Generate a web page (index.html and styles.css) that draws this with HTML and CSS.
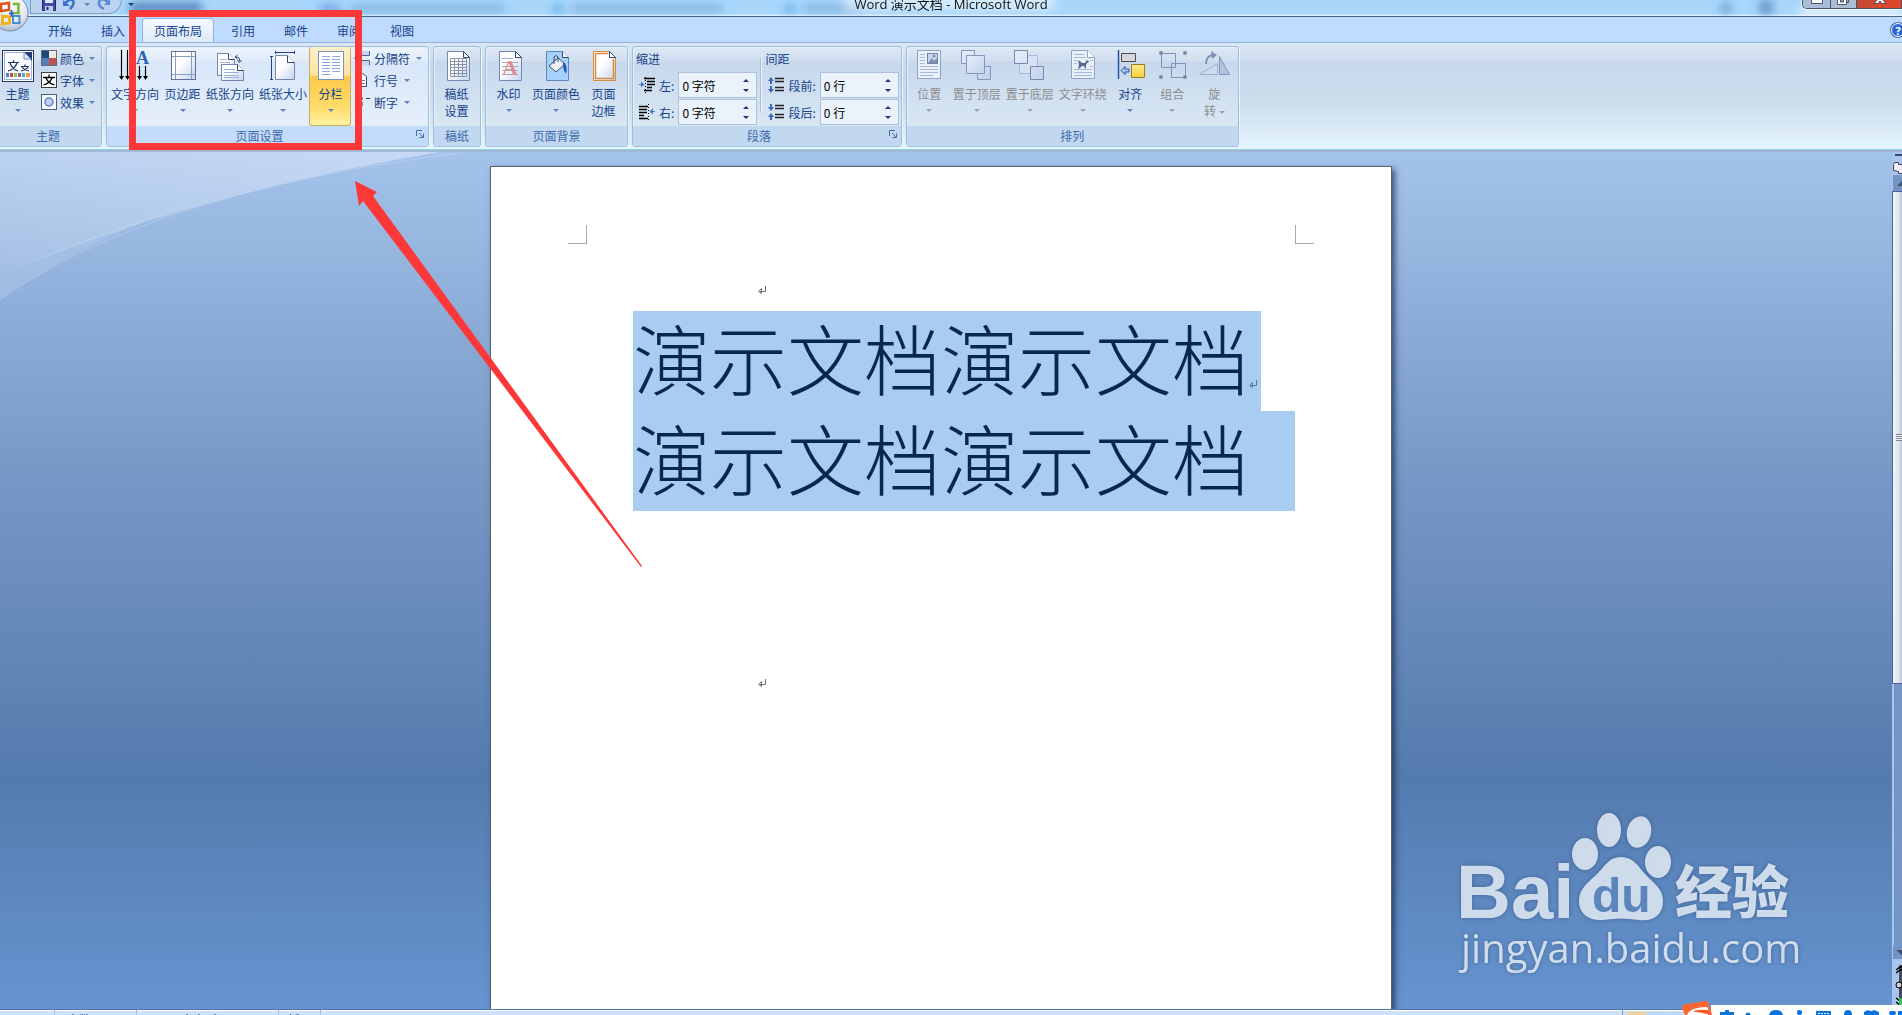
FILE: index.html
```html
<!DOCTYPE html>
<html lang="zh-CN">
<head>
  <meta charset="UTF-8">
  <meta name="viewport" content="width=device-width, initial-scale=1.0">
  <title>Word 演示文档 - Microsoft Word</title>
  <link rel="stylesheet" href="styles.css">
</head>
<body>

<svg class="defs" width="0" height="0" aria-hidden="true">
  <defs>
    <linearGradient id="paper" x1="0" y1="0" x2="1" y2="1">
      <stop offset="0.4" stop-color="#ffffff"/>
      <stop offset="1" stop-color="#c3d3ee"/>
    </linearGradient>
    <linearGradient id="pale" x1="0" y1="0" x2="1" y2="1">
      <stop offset="0" stop-color="#e6eefa"/>
      <stop offset="1" stop-color="#c2d1e8"/>
    </linearGradient>
    <linearGradient id="gold" x1="0" y1="0" x2="0" y2="1">
      <stop offset="0" stop-color="#ffe98c"/>
      <stop offset="1" stop-color="#f5cf3f"/>
    </linearGradient>
    <symbol id="left-page" viewBox="0 0 32 32">
      <path d="M6.500 1.500H22.500L28.500 7.500V30.500H6.500Z" fill="url(#paper)" stroke="#7488b0"/>
      <path d="M22.500 1.500V7.500H28.500Z" fill="#fff" stroke="#33476f"/>
    </symbol>
  </defs>
</svg>

<header class="titlebar">
  <svg class="glass" width="1902" height="16" aria-hidden="true">
    <filter id="soft"><feGaussianBlur stdDeviation="5 4"/></filter>
    <g filter="url(#soft)" fill="#4d7fb8">
      <rect x="130" y="3" width="72" height="9"/>
      <rect x="320" y="5" width="20" height="7" fill="#3b6fd0" opacity=".6"/>
      <rect x="350" y="4" width="155" height="8" opacity=".4"/>
      <circle cx="558" cy="9" r="5" fill="#2d8fd8" opacity=".6"/>
      <rect x="572" y="4" width="150" height="8" opacity=".4"/>
      <circle cx="790" cy="9" r="5" fill="#2d8fd8" opacity=".6"/>
      <rect x="804" y="4" width="60" height="8" opacity=".4"/>
      <rect x="845" y="-6" width="210" height="16" fill="#fff" opacity=".5"/>
      <circle cx="1726" cy="8" r="6" opacity=".6"/>
      <circle cx="1766" cy="7" r="8" opacity=".7"/>
      <rect x="1800" y="6" width="102" height="12" fill="#fff" opacity=".6"/>
    </g>
  </svg>
  <div class="quick-access">
    <button class="qa-btn" aria-label="保存">
      <svg width="14" height="12"><path d="M.500 -4V10.500H13.500V-4Z" fill="#4349a8" stroke="#23286c"/><path d="M3 -2h8v5H3z" fill="#dfe6ff"/><path d="M3 6h8v5H3z" fill="#c3c8ee"/><path d="M4.500 7h2v3h-2z" fill="#23286c"/></svg>
    </button>
    <button class="qa-btn" aria-label="撤消">
      <svg width="14" height="12"><path d="M2 3Q9 -3 10.500 2Q11 5 7 9" fill="none" stroke="#3b6fd0" stroke-width="2.500"/><path d="M0 0V6H7Z" fill="#3b6fd0"/></svg>
    </button>
    <span class="arrow"></span>
    <button class="qa-btn" aria-label="恢复">
      <svg width="14" height="12"><path d="M12 3Q4 -4 2 2Q1 6 7 9" fill="none" stroke="#5c8ad8" stroke-width="2.500"/><path d="M13 -1V5H7Z" fill="#5c8ad8"/></svg>
    </button>
  </div>
  <button class="qa-more" aria-label="自定义快速访问工具栏"><span class="arrow dark"></span></button>
  <h1 class="title">Word 演示文档 - Microsoft Word</h1>
  <div class="window-controls">
    <button aria-label="最小化"><svg width="27" height="8"><path d="M8.500 -1V3.500H19.500V-1" fill="#fff" stroke="#4c5468"/></svg></button>
    <button aria-label="还原"><svg width="25" height="8"><path d="M6.500 -2V4.500H15.500V-2" fill="#fff" stroke="#4c5468"/><path d="M9.500 -1h3v3h-3zM15.500 2.500h2V-1" fill="#8ea2bd" stroke="#4c5468"/></svg></button>
    <button class="close" aria-label="关闭"><svg width="44" height="8"><path d="M17 3.500L21 -1H25L29 3.500H25L23 1L21 3.500Z" fill="#fff" stroke="#4c4a58"/></svg></button>
  </div>
  <button class="office-button" aria-label="Office 按钮">
    <svg width="29" height="33" viewBox="0 0 29 33">
      <defs><radialGradient id="orb" cx=".5" cy=".3" r=".7"><stop offset="0" stop-color="#fff"/><stop offset=".7" stop-color="#e4e9f1"/><stop offset="1" stop-color="#aab5c8"/></radialGradient></defs>
      <circle cx="10" cy="13" r="18" fill="url(#orb)" stroke="#7f8ea9"/>
      <path d="M1 4L9 3V10L1 11Z" fill="none" stroke="#e3521b" stroke-width="2.500"/>
      <path d="M12.500 4H18.500V13H13.500" fill="none" stroke="#7db73a" stroke-width="2.500"/>
      <path d="M2.500 16V24L9.500 23V17Z" fill="none" stroke="#f3b21d" stroke-width="3"/>
      <path d="M13 16H19.500V23H13Z" fill="none" stroke="#3e8fd6" stroke-width="2"/>
      <path d="M9 13.500h5M11.500 10v7" stroke="#3765b8" stroke-width="2"/>
    </svg>
  </button>
</header>

<nav class="tabs">
  <button class="tab">开始</button>
  <button class="tab">插入</button>
  <button class="tab active">页面布局</button>
  <button class="tab">引用</button>
  <button class="tab">邮件</button>
  <button class="tab">审阅</button>
  <button class="tab">视图</button>
  <button class="help" aria-label="帮助">?</button>
</nav>

<section class="ribbon">

  <div class="group first">
    <div class="group-body">
      <button class="big">
        <svg width="32" height="32"><rect x=".500" y=".500" width="31" height="31" fill="#fff" stroke="#27375c"/><rect x="2.500" y="2.500" width="27" height="27" fill="#fafcff" stroke="#9fb2d6"/><path d="M22 2H30V11Z" fill="#1e3f7c"/><path d="M22 2V9H29Z" fill="#dfe8f6" stroke="#7b8db4"/><path d="M6 12.500h11M11.500 10v2M8 13q2 6 8 8M15 13q-2 6 -9 8M19 16.500h8M23 14.500v2M20 17q2 3 7 4M26 17q-2 3 -7 4" fill="none" stroke="#1d3363" stroke-width="1.200"/><path d="M4 23h3v4H4z" fill="#4f81bd"/><path d="M8 23h3v4H8z" fill="#c0504d"/><path d="M12 23h3v4h-3z" fill="#9bbb59"/><path d="M16 23h3v4h-3z" fill="#8064a2"/><path d="M20 23h3v4h-3z" fill="#4bacc6"/><path d="M24 23h4v4h-4z" fill="#f79646"/></svg>
        <span>主题</span><i class="arrow"></i>
      </button>
      <div class="side">
        <button class="small"><svg width="16" height="16"><path d="M0 0h8v8H0z" fill="#1f497d"/><path d="M8 0h8v8H8z" fill="#eeece1"/><path d="M0 8h8v8H0z" fill="#4f81bd"/><path d="M8 8h8v8H8z" fill="#c0504d"/><rect x=".500" y=".500" width="15" height="15" fill="none" stroke="#5f6b86"/></svg><span>颜色</span><i class="arrow"></i></button>
        <button class="small"><svg width="16" height="16"><rect x=".500" y=".500" width="15" height="15" fill="#fff" stroke="#3c3f48"/><path d="M2 5.500H14M8 2.500V5M5 6Q7 11 13.500 13M11 6Q9 11 2.500 13" fill="none" stroke="#000" stroke-width="1.300"/></svg><span>字体</span><i class="arrow"></i></button>
        <button class="small"><svg width="16" height="16"><rect x=".500" y=".500" width="15" height="15" fill="#f7faff" stroke="#4e5d7c"/><circle cx="8" cy="8" r="4" fill="#bcd2f6" stroke="#5f83c6" stroke-width="1.500"/></svg><span>效果</span><i class="arrow"></i></button>
      </div>
    </div>
    <div class="group-label">主题</div>
  </div>

  <div class="group hover">
    <div class="group-body">
      <button class="big">
        <svg width="32" height="32"><path d="M2.500 0V28M8.500 0V28M20.500 16V28M26.500 16V28" stroke="#000" stroke-width="1.200"/><path d="M0 26h5l-2.500 4zM6 26h5l-2.500 4zM18 26h5l-2.500 4zM24 26h5l-2.500 4z"/><text x="17" y="14" class="icon-letter blue">A</text></svg>
        <span>文字方向</span><i class="arrow"></i>
      </button>
      <button class="big">
        <svg width="32" height="32"><rect x="4.500" y="1.500" width="24" height="28" fill="url(#paper)" stroke="#5f7299"/><path d="M8.500 2V29M24.500 2V29M5 6.500H28M5 24.500H28" stroke="#8a9cc0"/></svg>
        <span>页边距</span><i class="arrow"></i>
      </button>
      <button class="big">
        <svg width="32" height="32"><path d="M3.500 3.500H14.500L20.500 9.500V25.500H3.500Z" fill="url(#paper)" stroke="#7488b0"/><path d="M14.500 3.500V9.500H20.500" fill="#fff" stroke="#33476f"/><path d="M6 9.500h7M6 12.500h10M6 15.500h10M6 18.500h4" stroke="#9cb0d8"/><path d="M7.500 14.500H23.500L29.500 20.500V30.500H7.500Z" fill="url(#paper)" stroke="#7488b0"/><path d="M23.500 14.500V20.500H29.500" fill="#fff" stroke="#33476f"/><path d="M10 19.500h11M10 22.500h15M10 25.500h15M10 27.500h15" stroke="#9cb0d8"/><path d="M22 7Q26 7 25.500 11M23.500 10l2 2.500l2 -2.500M23.500 5L21 7l2.500 2" fill="none" stroke="#33476f"/></svg>
        <span>纸张方向</span><i class="arrow"></i>
      </button>
      <button class="big">
        <svg width="32" height="32"><path d="M8.500 5.500H20.500L27.500 12.500V29.500H8.500Z" fill="url(#paper)" stroke="#7488b0"/><path d="M20.500 5.500V12.500H27.500" fill="#fff" stroke="#33476f"/><path d="M8.500 2.500H27.500M8.500 1v3M27.500 1v3M4.500 6V29.500M3 6.500h3M3 29.500h3" fill="none" stroke="#243f8c"/></svg>
        <span>纸张大小</span><i class="arrow"></i>
      </button>
      <button class="big selected">
        <svg width="32" height="32"><rect x="3.500" y="1.500" width="25" height="28" fill="#fff" stroke="#7a91c0"/><path d="M7 6.500h8M7 9.500h8M7 12.500h8M7 15.500h8M7 18.500h8M7 21.500h8M7 24.500h8M17 6.500h8M17 9.500h8M17 12.500h8M17 15.500h8M17 18.500h8M17 21.500h8" stroke="#8aa4dc"/></svg>
        <span>分栏</span><i class="arrow"></i>
      </button>
      <div class="side">
        <button class="small"><svg width="16" height="16"><path d="M3.500 1V5.500H15.500V1M3.500 15.500V10.500H15.500V15.500" fill="#c7d6ef" stroke="#4c6296"/><path d="M0 8h3" stroke="#4c6296"/></svg><span>分隔符</span><i class="arrow"></i></button>
        <button class="small"><svg width="16" height="16"><path d="M3.500 1.500H8.500L12.500 4.500V14.500H3.500Z" fill="#fff" stroke="#33476f"/><path d="M6 5.500h2M6 8.500h5M6 11.500h5" stroke="#6a80b0"/></svg><span>行号</span><i class="arrow"></i></button>
        <button class="small"><svg width="16" height="16"><path d="M3 3h5v3H3M8 6H4v3h5M6 9v5M4 11h5M12 4.500h4" fill="none" stroke="#33363e"/></svg><span>断字</span><i class="arrow"></i></button>
      </div>
    </div>
    <div class="group-label with-launcher">页面设置
      <button class="launcher" aria-label="页面设置对话框"><svg width="8" height="8"><path d="M.500 6V.500H6M3.500 7.500H7.500V3.500M3 3l4 4" fill="none" stroke="#4a6aa5"/></svg></button>
    </div>
  </div>

  <div class="group">
    <div class="group-body">
      <button class="big">
        <svg width="32" height="32"><use href="#left-page"/><path d="M9.500 8.500h16v18h-16zM13.500 8v18M17.500 8v18M21.500 8v18M9 11.500h16M9 14.500h16M9 17.500h16M9 20.500h16M9 23.500h16" fill="none" stroke="#8b95aa"/></svg>
        <span>稿纸<br>设置</span>
      </button>
    </div>
    <div class="group-label">稿纸</div>
  </div>

  <div class="group">
    <div class="group-body">
      <button class="big">
        <svg width="32" height="32"><use href="#left-page"/><path d="M9 8.500h11M9 12.500h16M9 16.500h16M9 20.500h16M9 24.500h16" stroke="#9caac6"/><text x="9" y="25" class="icon-letter red">A</text></svg>
        <span>水印</span><i class="arrow"></i>
      </button>
      <button class="big">
        <svg width="32" height="32"><path d="M6.500 1.500H22.500L28.500 7.500V30.500H6.500Z" fill="#a5d1fb" stroke="#5f86c0"/><path d="M22.500 1.500V7.500H28.500" fill="#fff" stroke="#33476f"/><path d="M9 16L18 8L25 14L16 22Z" fill="#eceff6" stroke="#3c4a68"/><path d="M14 14V7q2 -3 4 0v5" fill="none" stroke="#3c4a68"/><path d="M23 12q5 2 3 12q-3 -4 -3 -9z" fill="#2456b4"/></svg>
        <span>页面颜色</span><i class="arrow"></i>
      </button>
      <button class="big">
        <svg width="32" height="32"><path d="M5.500 1.500H21.500L27.500 7.500V30.500H5.500Z" fill="url(#paper)" stroke="#d98b3a"/><path d="M7.500 3.500H20.500M7.500 3.500V28.500H25.500V9" fill="none" stroke="#d98b3a" stroke-width="1.500"/><path d="M21.500 1.500V7.500H27.500Z" fill="#fff" stroke="#33476f"/></svg>
        <span>页面<br>边框</span>
      </button>
    </div>
    <div class="group-label">页面背景</div>
  </div>

  <div class="group">
    <div class="group-body fields">
      <div class="field-set">
        <h2>缩进</h2>
        <div class="field">
          <svg width="16" height="16"><path d="M5 1.500h11M8 4.500h8M8 7.500h8M8 10.500h5M5 13.500h8" stroke="#000" stroke-width="1.500"/><path d="M6.500 0v16" stroke="#000" stroke-dasharray="1 2"/><path d="M0 7h2V4.500L5.500 7.500L2 10.500V8H0z" fill="#4776cf"/></svg>
          <label for="indent-left">左:</label>
          <div class="spin"><input id="indent-left" type="text" value="0 字符"><span class="steps"><button class="up" aria-label="增加"></button><button class="down" aria-label="减少"></button></span></div>
        </div>
        <div class="field">
          <svg width="16" height="16"><path d="M0 2.500h9M0 5.500h8M0 8.500h8M0 11.500h5M0 14.500h9" stroke="#000" stroke-width="1.500"/><path d="M9.500 0v16" stroke="#000" stroke-dasharray="1 2"/><path d="M16 7h-2V4.500L10.500 7.500L14 10.500V8H16z" fill="#4776cf"/></svg>
          <label for="indent-right">右:</label>
          <div class="spin"><input id="indent-right" type="text" value="0 字符"><span class="steps"><button class="up" aria-label="增加"></button><button class="down" aria-label="减少"></button></span></div>
        </div>
      </div>
      <div class="divider"></div>
      <div class="field-set">
        <h2>间距</h2>
        <div class="field">
          <svg width="16" height="16"><path d="M7 1.500h9M7 4.500h9M7 10.500h9M7 13.500h9" stroke="#222" stroke-width="1.300"/><path d="M3 0L6 4H4V7H2V4H0ZM3 16L6 12H4V9H2V12H0Z" fill="#3d68c4"/></svg>
          <label for="space-before">段前:</label>
          <div class="spin"><input id="space-before" type="text" value="0 行"><span class="steps"><button class="up" aria-label="增加"></button><button class="down" aria-label="减少"></button></span></div>
        </div>
        <div class="field">
          <svg width="16" height="16"><path d="M7 1.500h9M7 4.500h9M7 10.500h9M7 13.500h9" stroke="#222" stroke-width="1.300"/><path d="M3 7L6 3H4V0H2V3H0ZM3 9L6 13H4V16H2V13H0Z" fill="#3d68c4"/></svg>
          <label for="space-after">段后:</label>
          <div class="spin"><input id="space-after" type="text" value="0 行"><span class="steps"><button class="up" aria-label="增加"></button><button class="down" aria-label="减少"></button></span></div>
        </div>
      </div>
    </div>
    <div class="group-label with-launcher">段落
      <button class="launcher" aria-label="段落对话框"><svg width="8" height="8"><path d="M.500 6V.500H6M3.500 7.500H7.500V3.500M3 3l4 4" fill="none" stroke="#4a6aa5"/></svg></button>
    </div>
  </div>

  <div class="group">
    <div class="group-body">
      <button class="big" disabled>
        <svg width="32" height="32"><rect x="4.500" y=".500" width="23" height="28" fill="#e9f0fa" stroke="#8fa3c8"/><rect x="14.500" y="3.500" width="10" height="10" fill="#c9d7ec" stroke="#6f84ad"/><path d="M15 13l4 -5l2 3l3 -3v5z" fill="#7b8fb6"/><circle cx="21" cy="6" r="1.500" fill="#7b8fb6"/><path d="M7 4.500h5M7 7.500h5M7 10.500h5M7 13.500h5M7 16.500h18M7 19.500h18M7 22.500h18M7 25.500h13" stroke="#a8b9d8"/></svg>
        <span>位置</span><i class="arrow"></i>
      </button>
      <button class="big" disabled>
        <svg width="32" height="32"><g fill="url(#pale)" stroke="#8297bf"><path d="M.500 .500h13v13H.500zM16.500 16.500h13v13h-13z"/><path d="M5.500 5.500h18v18h-18z"/></g></svg>
        <span>置于顶层</span><i class="arrow"></i>
      </button>
      <button class="big" disabled>
        <svg width="32" height="32"><path d="M5.500 5.500h18v18h-18z" fill="#d6e2f2" stroke="#a9badb"/><g fill="url(#pale)" stroke="#7288b2"><path d="M.500 .500h13v13H.500zM16.500 16.500h13v13h-13z"/></g></svg>
        <span>置于底层</span><i class="arrow"></i>
      </button>
      <button class="big" disabled>
        <svg width="32" height="32"><path d="M4.500 .500H20.500L27.500 7.500V28.500H4.500Z" fill="#e9f0fa" stroke="#8fa3c8"/><path d="M20.500 .500V7.500H27.500" fill="#fff" stroke="#8fa3c8"/><path d="M7 4.500h10M7 7.500h12M7 10.500h3M23 10.500h3M7 13.500h3M23 16.500h3M7 19.500h18M7 22.500h18M7 25.500h18" stroke="#a8b9d8"/><path d="M11 10l3 2l1 1h3l1 -2l2 -1l1 2l-2 1l-1 2v4l-1 -1l-1 -2h-2l-2 2l-2 1l1 -4z" fill="#566a90"/></svg>
        <span>文字环绕</span><i class="arrow"></i>
      </button>
      <button class="big">
        <svg width="32" height="32"><path d="M4.500 0V29" stroke="#2a50a8" stroke-width="1.500"/><path d="M7.500 3.500h14v8h-14z" fill="#d8d8dc" stroke="#4b4b54"/><path d="M17.500 14.500h13v13h-13z" fill="url(#gold)" stroke="#a07d1c"/><path d="M7 20.500L11 16.500V19H15V22H11V24.500Z" fill="#a9c7f6" stroke="#2a50a8"/></svg>
        <span>对齐</span><i class="arrow"></i>
      </button>
      <button class="big" disabled>
        <svg width="32" height="32"><g fill="none" stroke="#7f91b4"><path d="M5.500 3.500h14v14h-14zM15.500 13.500h14v14h-14z"/></g><g fill="#7689ae"><circle cx="5" cy="3" r="2"/><circle cx="29" cy="3" r="2"/><circle cx="5" cy="27" r="2"/><circle cx="29" cy="27" r="2"/></g></svg>
        <span>组合</span><i class="arrow"></i>
      </button>
      <button class="big" disabled>
        <svg width="32" height="32"><path d="M1.500 24.500L19.500 13.500V24.500Z" fill="#cfdbed" stroke="#9dafcf"/><path d="M21.500 24.500V6.500L31.500 24.500Z" fill="#b3c2dc" stroke="#8497bb"/><path d="M8 14Q8 6 15 5" fill="none" stroke="#7f91b4" stroke-width="2"/><path d="M13 1l6 4l-5 4z" fill="#7f91b4"/></svg>
        <span>旋<br>转 <i class="arrow inline"></i></span>
      </button>
    </div>
    <div class="group-label">排列</div>
  </div>
</section>

<main class="workspace">
  <svg class="swoosh" width="500" height="160" aria-hidden="true">
    <defs><linearGradient id="wave" x1="0" y1="1" x2="1" y2="0"><stop offset="0" stop-color="#d5e4f6" stop-opacity=".25"/><stop offset="1" stop-color="#e0e9fa" stop-opacity=".6"/></linearGradient></defs>
    <path d="M0 0H440Q200 40 0 123Z" fill="url(#wave)"/>
    <path d="M0 123Q130 65 285 24Q120 65 0 147Z" fill="#c5daf2" opacity=".3"/>
    <path d="M0 148Q150 40 460 1" fill="none" stroke="#c5daf4" stroke-opacity=".5"/>
  </svg>

  <div class="canvas">
    <article class="page">
      <div class="crop-marks"><span class="crop left"></span><span class="crop right"></span></div>
      <div class="doc">
        <p class="blank"><svg class="pilcrow" width="8" height="8"><path d="M7.500 0V5.500H2M3.500 2.500v5L.500 5.500Z" fill="none" stroke="#6f6f6f"/></svg></p>
        <p class="line"><mark>演示文档演示文档<svg class="pilcrow" width="8" height="8"><path d="M7.500 0V5.500H2M3.500 2.500v5L.500 5.500Z" fill="none" stroke="#56789f"/></svg></mark></p>
        <p class="line"><mark class="full">演示文档演示文档</mark></p>
        <p class="blank after"><svg class="pilcrow" width="8" height="8"><path d="M7.500 0V5.500H2M3.500 2.500v5L.500 5.500Z" fill="none" stroke="#6f6f6f"/></svg></p>
      </div>
    </article>
  </div>

  <div class="scrollbar">
    <div class="split"></div>
    <button class="ruler-toggle" aria-label="标尺"><svg width="10" height="12"><path d="M1.500 2.500l1 -2h4v2h4v9h-4v-2l-5 -1z" fill="#f6eef6" stroke="#3d4460"/></svg></button>
    <button class="scroll-btn" aria-label="向上滚动"><svg width="10" height="16"><path d="M4 11L10 5V11Z" fill="#47506e"/></svg></button>
    <div class="thumb"><span class="grip"></span></div>
    <div class="track"></div>
    <button class="scroll-btn" aria-label="向下滚动"><svg width="10" height="14"><path d="M3 5H10V11Z" fill="#47506e"/></svg></button>
    <svg class="browse" width="10" height="50"><path d="M7 6h3v44H7z" fill="#444a58"/><path d="M4 11l4 -3h2M4 14l4 -3h2M4 39l4 3h2M4 43l4 3h2" fill="none" stroke="#000" stroke-width="1.500"/><circle cx="7" cy="26" r="3" fill="#ccc" stroke="#000"/><path d="M7 39h3v8H7z" fill="#34c558"/></svg>
  </div>
</main>

<footer class="statusbar">
  <span class="status s-page">页面: 1/1</span>
  <span class="status s-words">字数: 16</span>
  <span class="status s-lang">中文(中国)</span>
  <span class="status s-mode">插入</span>
  <span class="views"><button class="view on" aria-label="页面视图"></button><button class="view" aria-label="阅读版式"></button><button class="view" aria-label="Web 版式"></button></span>
</footer>

<!-- input method bar -->
<div class="ime">
  <svg class="ime-logo" width="30" height="14"><path d="M0 7Q0 4 3 3.500L23 0Q26 0 27 3L30 14H3Z" fill="#fb6630"/><path d="M5 14Q8 6 25 6Q27 8 26 9Q13 8 11 11Q20 9 26 12V14Z" fill="#fff"/><path d="M12 11q7 -3 14 0v2q-7 -2 -14 -2z" fill="#fb4a1c"/></svg>
  <svg class="ime-icons" width="191" height="10"><g fill="#0b73dc"><path d="M9 7h5V5h4v2h5v3H9z"/><circle cx="37" cy="10" r="2.500"/><path d="M58 10q1 -5 7 -5t7 5z"/><rect x="86" y="5" width="5" height="5" rx="2"/><path d="M105 6h15v4h-15z"/><path d="M133 10q0 -5 4 -5t4 5z"/><path d="M153 10v-3l4 -2q3 2 6 0l5 2v3z"/><rect x="178" y="6" width="7" height="4" rx="2"/><rect x="187" y="6" width="4" height="4"/></g><path d="M107 8.500h11" stroke="#fff" stroke-dasharray="2 1"/></svg>
</div>

<svg class="watermark" width="350" height="170" aria-label="Baidu 经验">
  <g fill="#dbe5f1" opacity=".92">
    <text x="3" y="108" class="wm-bai">Bai</text>
    <ellipse cx="132" cy="44" rx="13" ry="16"/>
    <ellipse cx="156" cy="20" rx="12" ry="17"/>
    <ellipse cx="186" cy="22" rx="12" ry="16" transform="rotate(14 186 22)"/>
    <ellipse cx="205" cy="52" rx="13" ry="16"/>
    <path d="M168 47C156 47 152 56 145 63C136 72 126 78 126 91C126 105 138 111 150 110C162 108 174 108 186 110C200 112 210 105 210 91C210 78 201 74 192 64C185 56 180 47 168 47Z"/>
    <text x="222" y="103" class="wm-cjk">经验</text>
    <text x="8" y="153" class="wm-url">jingyan.baidu.com</text>
  </g>
  <text x="139" y="102" class="wm-du">du</text>
</svg>

<div class="callout-box"></div>
<svg class="callout-arrow" width="290" height="390" aria-hidden="true"><path d="M0 0L22 11L18 15L287 385L286 386L8 20L4 25Z" fill="#fd3838"/></svg>

</body>
</html>
```
FILE: styles.css
```css
* {
  margin: 0;
  padding: 0;
  box-sizing: border-box;
}

body {
  display: flex;
  flex-direction: column;
  height: 100vh;
  overflow: hidden;
  position: relative;
  font-family: "Noto Sans CJK SC", sans-serif;
  font-size: 12px;
  line-height: 17px;
  color: #15428b;
}

button {
  border: none;
  background: none;
  font: inherit;
  color: inherit;
}

svg { display: block; }
.defs { position: absolute; }

.arrow {
  display: block;
  width: 0;
  height: 0;
  border: 3px solid transparent;
  border-top-color: #5b84c0;
  border-bottom: none;
}
.arrow.dark { border-top-color: #1c3a78; }
.arrow.inline { display: inline-block; vertical-align: middle; }

/* title bar */
.titlebar {
  position: relative;
  display: flex;
  flex: none;
  height: 17px;
  background: linear-gradient(#a9d7fb, #a9d7fb 14px, #d6edfd 15px);
  border-bottom: 1px solid #4d6583;
}
.glass { position: absolute; left: 0; top: 0; }

.quick-access {
  position: relative;
  display: flex;
  align-items: flex-start;
  gap: 7px;
  width: 92px;
  height: 14px;
  margin-left: 30px;
  padding-left: 11px;
  background: #bcd3ef;
  border: 1px solid #7f9cc4;
  border-top: none;
  border-radius: 0 0 14px 0;
}
.quick-access .arrow { margin-top: 3px; }
.qa-more { position: relative; padding: 1px 6px 8px; }

.title {
  position: absolute;
  left: 0;
  right: 0;
  top: -4px;
  text-align: center;
  font: 13px/17px "Open Sans", "Noto Sans CJK SC", sans-serif;
  color: #111;
}

.window-controls {
  position: relative;
  display: flex;
  height: 9px;
  margin-left: auto;
  border: 1px solid #49566b;
  border-top: none;
  border-right: none;
  border-radius: 0 0 0 5px;
  overflow: hidden;
  box-shadow: 0 0 0 1px #e8f4fe;
}
.window-controls button {
  background: #a9bdd6;
  border-right: 1px solid #49566b;
}
.window-controls .close { background: linear-gradient(90deg, #c44a35, #e0462a); }

.office-button {
  position: absolute;
  left: 0;
  top: 0;
  z-index: 2;
}

/* tabs */
.tabs {
  display: flex;
  flex: none;
  align-items: flex-end;
  gap: 1px;
  height: 25px;
  padding-left: 34px;
  background: #bfdbff;
  overflow: hidden;
}
.tab {
  height: 24px;
  margin: 0 2px;
  padding: 0 11px 1px;
  border: 1px solid transparent;
  border-bottom: none;
}
.tab.active {
  background: linear-gradient(#f4f9ff, #dfeaf8);
  border-color: #8db2e3;
  border-radius: 4px 4px 0 0;
}
.help {
  flex: none;
  width: 14px;
  height: 14px;
  margin: 0 -3px 5px auto;
  border-radius: 7px;
  border: 1px solid #fff;
  background: #2b67d3;
  box-shadow: 0 0 0 1px #3d6aa8;
  color: #fff;
  font: bold 11px/11px "Open Sans", sans-serif;
}

/* ribbon */
.ribbon {
  display: flex;
  flex: none;
  gap: 4px;
  padding: 3px 0 2px;
  border-top: 1px solid #8db2e3;
  border-bottom: 1px solid #8fd0e0;
  background: linear-gradient(#dbe6f4, #d0ddee 17px, #c7d8ed 18px, #cddcec 55px, #d9e8f5 85px, #e5f6fe);
}
.group {
  display: flex;
  flex-direction: column;
  height: 101px;
  border: 1px solid #9ebfdb;
  border-radius: 3px;
  box-shadow: inset 1px 1px 0 #e6eff9, 1px 1px 0 #eaf5fd;
  background: linear-gradient(#dde8f5, #d0deef 14px, #c7d8ed 15px, #d9e7f3 79px);
  overflow: hidden;
}
.group.first { margin-left: -6px; }
.group.hover {
  background: linear-gradient(#ecf3fc, #e2ecf9 14px, #d8e6f8 15px, #e5effa 79px);
}
.group-body {
  display: flex;
  flex: 1;
  padding: 0 3px 0 1px;
}
.group-label {
  display: flex;
  justify-content: center;
  position: relative;
  height: 20px;
  line-height: 19px;
  background: #c1d8f0;
  color: #3e6aaa;
}
.group-label.with-launcher { padding-right: 16px; }
.group.hover .group-label { background: #c4dcfb; }
.launcher {
  position: absolute;
  right: 4px;
  top: 4px;
}

.big {
  display: flex;
  flex-direction: column;
  align-items: center;
  min-width: 42px;
  padding: 3px 1px 0 2px;
  border: 1px solid transparent;
  border-top: none;
  line-height: 17px;
}
.big svg { margin-bottom: 3px; }
.big > .arrow { margin-top: 7px; }
.big:disabled { color: #8d8d8d; }
.big:disabled .arrow { border-top-color: #a3a3a3; }
.big.selected {
  border-color: #c8ab64;
  border-radius: 3px;
  background: linear-gradient(#fdf0c8, #fce3a0 28px, #fdc94a 30px, #fddc6a 60px, #fff3a0);
}

.side {
  display: flex;
  flex-direction: column;
  padding: 0 3px;
}
.small {
  display: flex;
  align-items: center;
  gap: 4px;
  height: 22px;
}
.first .small { gap: 3px; }
.small .arrow { margin-left: 2px; }

.group-body.fields { padding: 0 2px 0 3px; }
.field-set {
  display: flex;
  flex-direction: column;
  gap: 1px;
}
.field-set h2 {
  height: 24px;
  font: 12px/24px "Noto Sans CJK SC", sans-serif;
}
.field {
  display: flex;
  align-items: center;
  gap: 4px;
  padding-left: 3px;
}
.field label { white-space: nowrap; }
.spin {
  display: flex;
  width: 79px;
  height: 26px;
  margin-left: auto;
  background: #eaf2fb;
  border: 1px solid #abc1de;
}
.spin input {
  flex: 1;
  min-width: 0;
  padding-left: 3px;
  border: none;
  background: none;
  font: inherit;
  color: #000;
}
.steps {
  display: flex;
  flex-direction: column;
  justify-content: center;
  gap: 7px;
  width: 13px;
}
.steps button {
  width: 0;
  height: 0;
  border: 3px solid transparent;
}
.steps .up { border-bottom-color: #1c3a78; border-top: none; }
.steps .down { border-top-color: #1c3a78; border-bottom: none; }
.divider {
  width: 2px;
  height: 55px;
  margin: 11px 3px 0;
  background: #f0f6fd;
  border-left: 1px solid #a5bcdb;
}

/* document area */
.workspace {
  position: relative;
  display: flex;
  flex: 1;
  min-height: 0;
  border-top: 2px solid #a3b6d4;
  background: linear-gradient(#a4c3eb, #7a9ac8 35%, #547bae 73%, #6694d0);
}
.swoosh { position: absolute; left: 0; top: 0; }
.canvas {
  position: relative;
  display: flex;
  flex: 1;
  justify-content: center;
  padding: 14px 10px 0 0;
  overflow: hidden;
}
.page {
  width: 902px;
  padding: 58px 77px 0;
  background: #fff;
  border: 1px solid #5c646f;
  border-bottom: none;
  box-shadow: 3px 3px 6px rgba(20, 40, 80, 0.7);
}
.crop-marks {
  display: flex;
  justify-content: space-between;
}
.crop {
  width: 19px;
  height: 19px;
  border-bottom: 1px solid #aaa;
}
.crop.left { border-right: 1px solid #aaa; }
.crop.right { border-left: 1px solid #aaa; }

.doc { padding: 0 19px 0 65px; }
.blank {
  height: 67px;
  padding: 42px 0 0 125px;
}
.blank.after {
  height: auto;
  padding-top: 168px;
}
.line {
  height: 100px;
  font-size: 77px;
  line-height: 92px;
  font-weight: 300;
  white-space: nowrap;
}
mark {
  display: inline-flex;
  height: 100px;
  padding-right: 4px;
  background: #a9cdf1;
  color: #04284f;
  vertical-align: top;
}
mark.full { display: flex; }
mark .pilcrow { margin-top: 69px; }

/* scrollbar */
.scrollbar {
  position: relative;
  display: flex;
  flex-direction: column;
  width: 10px;
  background: #a8c5ee;
}
.split {
  height: 2px;
  margin: 2px 0 4px 3px;
  background: #3d4668;
}
.ruler-toggle { height: 15px; }
.scroll-btn {
  background: #7394c4;
  border-left: 1px solid #a8c5ee;
}
.thumb {
  display: flex;
  align-items: center;
  flex: 491;
  background: linear-gradient(90deg, #f4f7fa, #dce2ec 6px, #b8c6dc);
  border: 1px solid #4e6496;
  border-right: none;
}
.grip {
  width: 6px;
  height: 7px;
  margin-left: 3px;
  background: repeating-linear-gradient(#7d8592 0 1px, #f4f4f4 1px 2px);
}
.track {
  flex: 261;
  background: #7394c4;
  border-left: 2px solid #a8c5ee;
}

/* status bar */
.statusbar {
  display: flex;
  flex: none;
  height: 6px;
  overflow: hidden;
  border-top: 1px solid #4e75a8;
  box-shadow: inset 0 1px 0 #fff;
  background: #cfe1fa;
}
.status {
  padding-top: 1px;
  border-right: 1px solid #a3bbe0;
  color: #0f2468;
  white-space: nowrap;
}
.s-page { width: 55px; }
.s-words { width: 82px; padding-left: 12px; }
.s-lang { width: 142px; padding-left: 44px; }
.s-mode { width: 42px; padding-left: 9px; }
.views {
  display: flex;
  gap: 1px;
  width: 280px;
  margin-left: auto;
  padding: 2px 0 0 5px;
  border-left: 1px solid #7d9cc8;
}
.view { width: 18px; background: #c3d8f4; }
.view.on { background: #f0d2a0; }

/* overlays */
.ime {
  position: absolute;
  right: 0;
  bottom: 0;
  height: 10px;
  background: #fff;
}
.ime-logo {
  position: absolute;
  right: 190px;
  bottom: 0;
}

.watermark {
  position: absolute;
  right: 99px;
  bottom: 35px;
  overflow: visible;
  filter: drop-shadow(0 0 2px rgba(40, 70, 120, 0.6));
}
.wm-bai { font: bold 76px "Liberation Sans", sans-serif; }
.wm-cjk { font: 900 57px "Noto Sans CJK SC", sans-serif; }
.wm-url { font: 40px "Open Sans", sans-serif; }
.wm-du { font: bold 48px "Liberation Sans", sans-serif; fill: #5c85bd; }

.icon-letter { font: bold 18px "Liberation Serif", serif; }
.icon-letter.blue { fill: #2f62b5; }
.icon-letter.red { font-size: 22px; fill: #d98f92; }

.callout-box {
  position: absolute;
  left: 129px;
  top: 10px;
  width: 233px;
  height: 140px;
  border: 7px solid #fd3838;
  z-index: 3;
}
.callout-arrow {
  position: absolute;
  left: 355px;
  top: 181px;
  z-index: 3;
}
```
